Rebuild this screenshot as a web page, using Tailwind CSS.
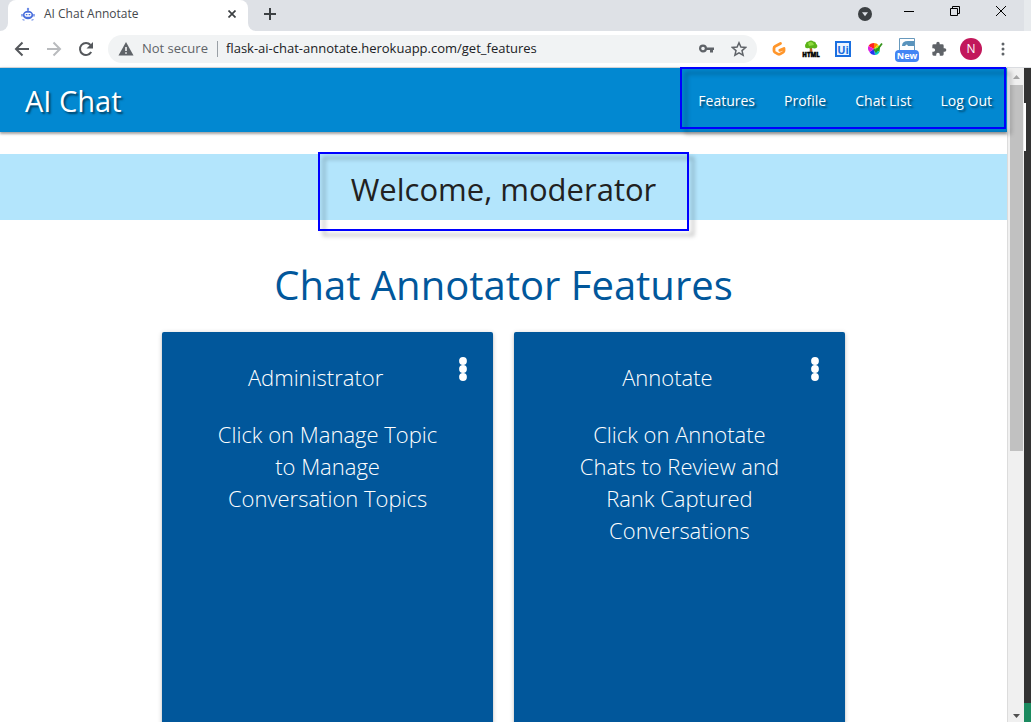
<!DOCTYPE html>
<html lang="en">
<head>
<meta charset="utf-8">
<meta name="viewport" content="width=device-width, initial-scale=1">
<title>AI Chat Annotate</title>
<script src="https://cdn.jsdelivr.net/npm/@tailwindcss/browser@4"></script>
</head>
<body class="flex h-screen overflow-hidden bg-white font-['Open_Sans','Noto_Sans',sans-serif]">
<div class="flex min-w-0 flex-1 flex-col">

  <!-- Tab strip -->
  <div class="flex h-[31px] shrink-0 bg-[#dee1e6]">
    <div class="w-2 bg-white"><div class="h-full rounded-br-lg bg-[#dee1e6]"></div></div>
    <div class="flex w-60 items-center rounded-t-lg bg-white pr-2 pl-[13px] pb-[3px]">
      <svg class="h-4 w-[14px] shrink-0" viewBox="0 0 14 16">
        <path d="M7 6V3M1 8v2.500M13 8v2.500" stroke="#6d8ce6" stroke-width="1.500"/>
        <circle cx="7" cy="3" r="1.200" fill="#6d8ce6"/>
        <ellipse cx="7" cy="9" rx="5.200" ry="4.300" fill="#4a6fdc"/>
        <rect x="3.500" y="6.800" width="7" height="4" rx="2" fill="#fff"/>
        <path d="M4.800 8.600h1.600M7.600 8.600h1.600" stroke="#4a6fdc" stroke-width="1.400"/>
        <path d="M1.500 13.500l2 .8M12.500 13.500l-2 .8" stroke="#6d8ce6" stroke-width="1.200"/>
      </svg>
      <span class="ml-[9px] flex-1 text-xs whitespace-nowrap text-[#45484c]">AI Chat Annotate</span>
      <button aria-label="Close tab" class="flex h-4 w-4 items-center justify-center">
        <svg class="h-2 w-2" viewBox="0 0 8 8" stroke="#3c4043" stroke-width="1.700"><path d="M.5.500l7 7M7.500.500l-7 7"/></svg>
      </button>
    </div>
    <div class="w-2 bg-white"><div class="h-full rounded-bl-lg bg-[#dee1e6]"></div></div>
    <button aria-label="New tab" class="flex h-7 w-7 items-center justify-center">
      <svg class="h-3 w-3" viewBox="0 0 12 12" stroke="#3c4043" stroke-width="2"><path d="M6 0v12M0 6h12"/></svg>
    </button>
    <div class="flex-1"></div>
    <button aria-label="Search tabs" class="mr-8 flex h-7 w-[14px] items-center">
      <svg class="h-[14px] w-[14px]" viewBox="0 0 14 14"><circle cx="7" cy="7" r="7" fill="#3c4043"/><path d="M4 5.200h6L7 9.300z" fill="#dee1e6"/></svg>
    </button>
    <div class="mr-[18px] flex h-[22px] items-center gap-9">
      <button aria-label="Minimize"><svg class="h-[10px] w-[10px]" viewBox="0 0 10 10" stroke="#000"><path d="M0 5.500h10"/></svg></button>
      <button aria-label="Restore"><svg class="h-[10px] w-[10px]" viewBox="0 0 10 10" fill="none" stroke="#000"><path d="M.5 2.500h7v7h-7zM2.500 2.500v-2h7v7h-2"/></svg></button>
      <button aria-label="Close window"><svg class="h-[10px] w-[10px]" viewBox="0 0 10 10" stroke="#000"><path d="M0 0l10 10M10 0L0 10"/></svg></button>
    </div>
  </div>

  <!-- Address bar -->
  <div class="flex h-[37px] shrink-0 items-center border-b border-[#dadce0] bg-white pr-4 pl-[14px]">
    <div class="flex items-center gap-4">
      <button aria-label="Back"><svg class="h-4 w-4" viewBox="0 0 16 16" fill="none" stroke="#55585c" stroke-width="2"><path d="M15 8H2.500M8.500 1.500L2 8l6.500 6.500"/></svg></button>
      <button aria-label="Forward" disabled><svg class="h-4 w-4" viewBox="0 0 16 16" fill="none" stroke="#b9bbbe" stroke-width="2"><path d="M1 8h12.500M7.500 1.500L14 8l-6.500 6.500"/></svg></button>
      <button aria-label="Reload"><svg class="h-4 w-4" viewBox="0 0 16 16"><path d="M13.200 11A6 6 0 1 1 12.500 4" fill="none" stroke="#55585c" stroke-width="2"/><path d="M15 1v6.500H8.500z" fill="#55585c"/></svg></button>
    </div>
    <div class="ml-[14px] flex h-7 min-w-0 flex-1 items-center rounded-full bg-[#f1f3f4] pr-[10px] pl-[10px]">
      <svg class="h-[14px] w-4 shrink-0" viewBox="0 0 16 14"><path d="M8 0l7.500 13.500H.5z" fill="#5f6368"/><path d="M8 5v4M8 10.200v1.600" stroke="#fff" stroke-width="1.500"/></svg>
      <span class="ml-2 w-[67px] text-[13px] whitespace-nowrap text-[#5f6368]">Not secure</span>
      <span class="mx-2 h-4 w-px bg-[#9aa0a6]"></span>
      <input aria-label="Address" value="flask-ai-chat-annotate.herokuapp.com/get_features" class="min-w-0 flex-1 bg-transparent text-[13px] text-[#202124] outline-none">
      <svg class="mr-[17px] h-[14px] w-[15px] shrink-0" viewBox="0 0 15 14"><circle cx="4" cy="6.500" r="2.900" fill="none" stroke="#5f6368" stroke-width="2.200"/><path d="M6 5.500h9v2.500h-1v2.500h-3V8H6z" fill="#5f6368"/></svg>
      <button aria-label="Bookmark this page"><svg class="h-4 w-4" viewBox="0 0 16 16" fill="none" stroke="#5f6368" stroke-width="1.500"><path d="M8 1.800l1.900 4.300 4.700.4-3.600 3.100 1.100 4.600L8 11.800l-4.100 2.400L5 9.600 1.400 6.500l4.700-.4z"/></svg></button>
    </div>
    <div class="ml-[14px] flex items-center">
      <button aria-label="Gitpod" class="mr-4"><svg class="h-4 w-4" viewBox="0 0 16 16" fill="none" stroke="#ff962b" stroke-width="2.800" stroke-linecap="round" stroke-linejoin="round"><path d="M9.500 2.500L4.300 5.300Q3 6 3 7.300v2.500q0 1 1 1.600l3 1.700q1 .5 2 0l3-1.700q1-.6 1-1.600V7.500L8.800 9.400"/></svg></button>
      <button aria-label="HTML Tree" class="mr-4"><svg class="h-[18px] w-4 overflow-visible" viewBox="0 0 16 18"><path d="M7 7h2l.5 5.500h-3z" fill="#b5622a"/><path d="M5.500 1.500Q8-.500 10.500 1.500q2.500 0 2.500 2.500 2 1 1 3.500Q12 9 9.500 8q-2 1-4 0Q2 9 2 6q0-2 1-2.500 0-2 2.500-2z" fill="#5bb318"/><path d="M5 3q3-2 5 0l1 2-5 1z" fill="#8fda3f"/><text x="8" y="17" text-anchor="middle" font-family="Open Sans" font-size="6" font-weight="800" stroke="#000" stroke-width=".4">HTML</text></svg></button>
      <button aria-label="UiPath" class="mr-4 flex h-4 w-4 items-center justify-center border-2 border-[#1a6fe0] bg-[#eaf3ff] text-[11px] leading-none font-bold text-[#1a6fe0]">Ui</button>
      <button aria-label="Color picker" class="mr-3"><svg class="h-4 w-4" viewBox="0 0 16 16"><path d="M7 8L1.500 5Q3 2 7 2z" fill="#f22"/><path d="M7 8V2q3 0 4 1.500z" fill="#f80"/><path d="M7 8l4-4.500L12.500 6z" fill="#dde000"/><path d="M7 8l6-2-.5 5z" fill="#18b818"/><path d="M7 8l5.500 3Q11 14 8 14z" fill="#08c8c0"/><path d="M7 8l1 6q-4 0-5.500-3z" fill="#2430f0"/><path d="M7 8l-4.500 3Q0 8 1.500 5z" fill="#e020e0"/><path d="M7 8l2 2.500L15 2.500" fill="none" stroke="#35951c" stroke-width="1.800"/></svg></button>
      <button aria-label="Screen capture" class="relative mr-3 h-[22px] w-6">
        <svg class="mx-auto mb-[6px] h-4 w-4" viewBox="0 0 16 16"><path d="M.5.500h15v12H.5z" fill="#fff" stroke="#6799bd"/><path d="M3 8q0-5 6-5h6v5H9Q8 5 6 8z" fill="#5a94bd"/></svg>
        <span class="absolute inset-x-0 bottom-[-2px] h-3 rounded-sm bg-[#4285f4] text-center text-[9px] leading-3 font-bold text-white">New</span>
      </button>
      <button aria-label="Extensions" class="mr-[13px]"><svg class="h-4 w-4" viewBox="0 0 24 24" fill="#5f6368"><path d="M20.500 11H19V7a2 2 0 0 0-2-2h-4V3.500a2.500 2.500 0 0 0-5 0V5H4a2 2 0 0 0-2 2v3.800h1.500a2.700 2.700 0 0 1 0 5.400H2V20a2 2 0 0 0 2 2h3.800v-1.500a2.700 2.700 0 0 1 5.400 0V22H17a2 2 0 0 0 2-2v-4h1.500a2.500 2.500 0 0 0 0-5z"/></svg></button>
      <button aria-label="Profile N" class="mr-4 flex h-[22px] w-[22px] items-center justify-center rounded-full bg-[#c2185b] text-xs text-white">N</button>
      <button aria-label="Menu"><svg class="h-4 w-[10px]" viewBox="0 0 10 16" fill="#5f6368"><circle cx="5" cy="3" r="1.500"/><circle cx="5" cy="8" r="1.500"/><circle cx="5" cy="13" r="1.500"/></svg></button>
    </div>
  </div>

  <!-- Page viewport -->
  <div class="flex min-h-0 flex-1">
    <div class="flex min-w-0 flex-1 flex-col">
      <header class="flex h-16 shrink-0 items-center justify-between bg-[#0288d1] pl-[25px] text-white shadow-[0_2px_2px_rgba(0,0,0,0.25),0_1px_4px_rgba(0,0,0,0.2)] text-shadow-[2px_2px_2px_rgba(0,0,0,0.5)]">
        <a href="#" class="pt-px text-[29px]">AI Chat</a>
        <nav class="relative flex h-16 items-center gap-[29px] pt-[2px] pr-[15px] pl-[18px] text-sm">
          <a href="#">Features</a>
          <a href="#">Profile</a>
          <a href="#">Chat List</a>
          <a href="#">Log Out</a>
          <span class="pointer-events-none absolute -top-px right-px bottom-[3px] left-0 border-2 border-[#0000ff] drop-shadow-[5px_5px_2px_rgba(0,0,0,0.3)]"></span>
        </nav>
      </header>
      <main class="min-h-0 flex-1 overflow-hidden pt-[22px]">
        <div class="flex h-[66px] justify-center bg-[#b3e5fc]">
          <h1 class="relative px-[33px] text-[31px] leading-[70px] font-normal whitespace-nowrap text-[#212121]">Welcome, moderator
            <span class="pointer-events-none absolute inset-x-0 -top-[2px] h-[79px] border-2 border-[#0000ff] drop-shadow-[5px_5px_2px_rgba(0,0,0,0.3)]"></span>
          </h1>
        </div>
        <h2 class="mt-10 text-center text-[40px] leading-[50px] text-[#01579b]">Chat Annotator Features</h2>
        <div class="mx-auto mt-[22px] grid w-[67.8%] grid-cols-2 gap-[21px] text-center text-[22px] leading-8 font-light text-white">
          <section class="h-[450px] rounded-xs bg-[#01579b] px-6 pt-6 shadow-[0_2px_2px_rgba(0,0,0,0.14),0_1px_5px_rgba(0,0,0,0.2)]">
            <div class="flex">
              <h3 class="flex-1 pt-1 leading-[34px]">Administrator</h3>
              <button aria-label="Administrator options" class="mt-px mr-[2px] ml-[14px] h-6 w-2"><svg class="h-6 w-2" viewBox="0 0 8 24" fill="#fff"><circle cx="4" cy="4" r="3.900"/><circle cx="4" cy="12" r="3.900"/><circle cx="4" cy="20" r="3.900"/></svg></button>
            </div>
            <p class="mt-6 px-6">Click on Manage Topic<br>to Manage<br>Conversation Topics</p>
          </section>
          <section class="h-[450px] rounded-xs bg-[#01579b] px-6 pt-6 shadow-[0_2px_2px_rgba(0,0,0,0.14),0_1px_5px_rgba(0,0,0,0.2)]">
            <div class="flex">
              <h3 class="flex-1 pt-1 leading-[34px]">Annotate</h3>
              <button aria-label="Annotate options" class="mt-px mr-[2px] ml-[14px] h-6 w-2"><svg class="h-6 w-2" viewBox="0 0 8 24" fill="#fff"><circle cx="4" cy="4" r="3.900"/><circle cx="4" cy="12" r="3.900"/><circle cx="4" cy="20" r="3.900"/></svg></button>
            </div>
            <p class="mt-6 px-6">Click on Annotate<br>Chats to Review and<br>Rank Captured<br>Conversations</p>
          </section>
        </div>
      </main>
    </div>
    <!-- Scrollbar -->
    <div class="flex w-[17px] shrink-0 flex-col items-center border-l border-[#dcdcdc] bg-[#f0f0f0]">
      <svg class="h-[17px] w-[17px] shrink-0" viewBox="0 0 17 17"><path d="M5 11l3.500-4 3.500 4z" fill="#a3a3a3"/></svg>
      <div class="h-[56%] w-[13px] bg-[#c1c1c1]"></div>
      <div class="flex-1"></div>
      <svg class="h-[13px] w-[17px] shrink-0" viewBox="0 0 17 13"><path d="M5 5l3.500 4L12 5z" fill="#505050"/></svg>
    </div>
  </div>
</div>

<!-- Sliver of the window behind -->
<div class="flex w-[7px] shrink-0 flex-col bg-[#333]">
  <div class="h-[31px] bg-[#e7eaed]"></div>
  <div class="h-[37px] border-b border-[#dadce0] bg-white"></div>
  <div class="h-[35px]"></div>
  <div class="h-12 w-[2px] bg-white"></div>
  <div class="flex-1"></div>
  <div class="h-[19px] bg-[#1b8a5f]"></div>
</div>
</body>
</html>
